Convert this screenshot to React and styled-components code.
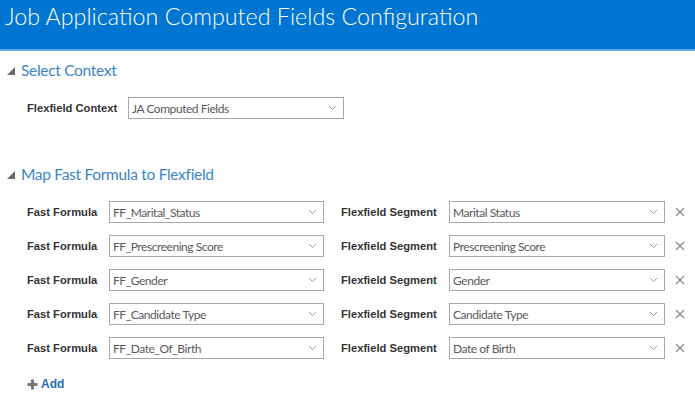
import React from "react";
import styled, { createGlobalStyle } from "styled-components";

const Global = createGlobalStyle`
  body {
    margin: 0;
    background: #fff;
    font-family: "Liberation Sans", Arial, sans-serif;
  }
`;

const Page = styled.div`
  width: 695px;
  height: 410px;
  overflow: hidden;
  background: #fff;
`;

const Header = styled.header`
  height: 51px;
  box-sizing: border-box;
  background: #0075d1;
  border-bottom: 2px solid #62a8e5;
  display: flex;
  align-items: flex-start;
  padding: 2px 0 0 5px;
`;

const Title = styled.h1`
  margin: 0;
  font-family: Lato, sans-serif;
  font-weight: 300;
  font-size: 23.3px;
  color: #fff;
`;

const Section = styled.section`
  padding: 0 0 0 7px;
`;

const SectionHead = styled.div`
  display: flex;
  align-items: center;
  gap: 6px;
  height: 24px;
  margin-top: ${(p) => p.$top}px;
`;

const Triangle = styled.span`
  width: 0;
  height: 0;
  border-left: 8px solid transparent;
  border-bottom: 8px solid #6b6b6b;
  margin-top: 1px;
`;

const SectionTitle = styled.h2`
  margin: 0;
  font-family: Lato, sans-serif;
  font-weight: 400;
  font-size: 15.5px;
  letter-spacing: -0.3px;
  color: #3d84c6;
`;

const Rows = styled.div`
  display: flex;
  flex-direction: column;
  gap: 12px;
  padding-left: 20px;
  margin-top: ${(p) => p.$top}px;
`;

const Row = styled.div`
  display: flex;
  align-items: center;
  height: 22px;
`;

const Label = styled.span`
  font-weight: bold;
  font-size: 11.2px;
  color: #333;
  width: ${(p) => p.$w}px;
  flex: none;
`;

const Select = styled.div`
  width: ${(p) => p.$w}px;
  height: 22px;
  box-sizing: border-box;
  border: 1px solid #a8a8a8;
  display: flex;
  align-items: center;
  justify-content: space-between;
  padding: 0 6px 0 3px;
  font-family: Lato, sans-serif;
  font-size: 12px;
  letter-spacing: -0.45px;
  color: #5a5a5a;
  flex: none;
`;

const Chevron = () => (
  <svg width="9" height="6" viewBox="0 0 9 6">
    <path d="M1 1l3.5 3.5L8 1" fill="none" stroke="#999" strokeWidth="1" />
  </svg>
);

const Remove = styled.span`
  margin-left: 10px;
  display: flex;
`;

const Cross = () => (
  <svg width="10" height="10" viewBox="0 0 10 10">
    <path d="M1 1l8 8M9 1l-8 8" stroke="#8a8a8a" strokeWidth="1.2" />
  </svg>
);

const Gap = styled.span`
  width: ${(p) => p.$w}px;
  flex: none;
`;

const AddButton = styled.button`
  display: flex;
  align-items: center;
  gap: 3px;
  border: none;
  background: none;
  padding: 0;
  margin-top: 6px;
  font-family: "Liberation Sans", Arial, sans-serif;
  font-weight: bold;
  font-size: 12px;
  color: #2a6db5;
  cursor: pointer;
`;

const Plus = () => (
  <svg width="11" height="11" viewBox="0 0 11 11">
    <path d="M5.5 0.5v10M0.5 5.5h10" stroke="#777" strokeWidth="3" />
  </svg>
);

const mappings = [
  ["FF_Marital_Status", "Marital Status"],
  ["FF_Prescreening Score", "Prescreening Score"],
  ["FF_Gender", "Gender"],
  ["FF_Candidate Type", "Candidate Type"],
  ["FF_Date_Of_Birth", "Date of Birth"],
];

export default function App() {
  return (
    <Page>
      <Global />
      <Header>
        <Title>Job Application Computed Fields Configuration</Title>
      </Header>

      <Section>
        <SectionHead $top={7}>
          <Triangle />
          <SectionTitle>Select Context</SectionTitle>
        </SectionHead>
        <Rows $top={15}>
          <Row>
            <Label $w={101}>Flexfield Context</Label>
            <Select $w={216}>
              JA Computed Fields
              <Chevron />
            </Select>
          </Row>
        </Rows>
      </Section>

      <Section>
        <SectionHead $top={43}>
          <Triangle />
          <SectionTitle>Map Fast Formula to Flexfield</SectionTitle>
        </SectionHead>
        <Rows $top={15}>
          {mappings.map(([formula, segment]) => (
            <Row key={formula}>
              <Label $w={82}>Fast Formula</Label>
              <Select $w={215}>
                {formula}
                <Chevron />
              </Select>
              <Gap $w={17} />
              <Label $w={108}>Flexfield Segment</Label>
              <Select $w={216}>
                {segment}
                <Chevron />
              </Select>
              <Remove>
                <Cross />
              </Remove>
            </Row>
          ))}
          <AddButton>
            <Plus />
            Add
          </AddButton>
        </Rows>
      </Section>
    </Page>
  );
}
